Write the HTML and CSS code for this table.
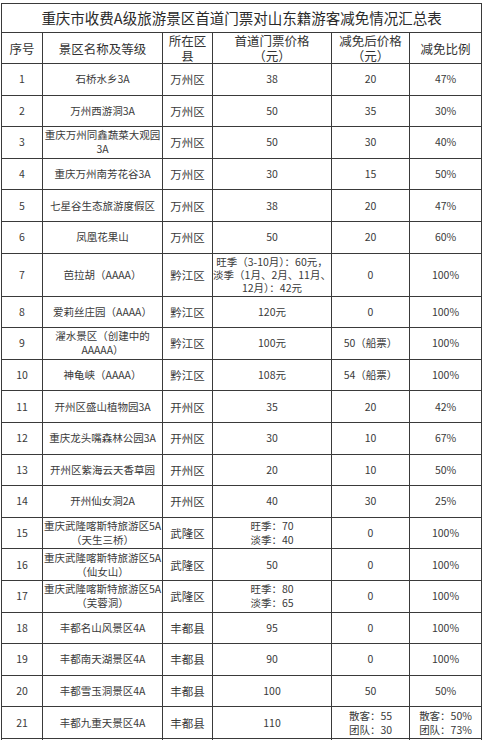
FILE: index.html
```html
<!DOCTYPE html>
<html lang="zh-CN">
<head>
<meta charset="utf-8">
<title>重庆市收费A级旅游景区首道门票对山东籍游客减免情况汇总表</title>
<link rel="stylesheet" href="styles.css">
</head>
<body>
<table class="sheet">
  <colgroup>
    <col class="c-no">
    <col class="c-name">
    <col class="c-area">
    <col class="c-price">
    <col class="c-after">
    <col class="c-rate">
  </colgroup>
  <thead>
    <tr class="r-title"><th colspan="6" class="title">重庆市收费A级旅游景区首道门票对山东籍游客减免情况汇总表</th></tr>
    <tr class="r-head">
      <th>序号</th>
      <th>景区名称及等级</th>
      <th>所在区<br>县</th>
      <th>首道门票价格<br>（元）</th>
      <th>减免后价格<br>（元）</th>
      <th>减免比例</th>
    </tr>
  </thead>
  <tbody>
    <tr><td>1</td><td>石桥水乡3A</td><td class="area">万州区</td><td>38</td><td>20</td><td>47%</td></tr>
    <tr><td>2</td><td>万州西游洞3A</td><td class="area">万州区</td><td>50</td><td>35</td><td>30%</td></tr>
    <tr><td>3</td><td>重庆万州同鑫蔬菜大观园<br>3A</td><td class="area">万州区</td><td>50</td><td>30</td><td>40%</td></tr>
    <tr><td>4</td><td>重庆万州南芳花谷3A</td><td class="area">万州区</td><td>30</td><td>15</td><td>50%</td></tr>
    <tr><td>5</td><td>七星谷生态旅游度假区</td><td class="area">万州区</td><td>38</td><td>20</td><td>47%</td></tr>
    <tr><td>6</td><td>凤凰花果山</td><td class="area">万州区</td><td>50</td><td>20</td><td>60%</td></tr>
    <tr class="r-tall"><td>7</td><td>芭拉胡（AAAA）</td><td class="area">黔江区</td><td class="multi">旺季（3-10月）：60元，<br>淡季（1月、2月、11月、<br>12月）：42元</td><td>0</td><td>100%</td></tr>
    <tr><td>8</td><td>爱莉丝庄园（AAAA）</td><td class="area">黔江区</td><td>120元</td><td>0</td><td>100%</td></tr>
    <tr><td>9</td><td>濯水景区（创建中的<br>AAAAA）</td><td class="area">黔江区</td><td>100元</td><td>50（船票）</td><td>100%</td></tr>
    <tr><td>10</td><td>神龟峡（AAAA）</td><td class="area">黔江区</td><td>108元</td><td>54（船票）</td><td>100%</td></tr>
    <tr><td>11</td><td>开州区盛山植物园3A</td><td class="area">开州区</td><td>35</td><td>20</td><td>42%</td></tr>
    <tr><td>12</td><td>重庆龙头嘴森林公园3A</td><td class="area">开州区</td><td>30</td><td>10</td><td>67%</td></tr>
    <tr><td>13</td><td>开州区紫海云天香草园</td><td class="area">开州区</td><td>20</td><td>10</td><td>50%</td></tr>
    <tr><td>14</td><td>开州仙女洞2A</td><td class="area">开州区</td><td>40</td><td>30</td><td>25%</td></tr>
    <tr><td>15</td><td>重庆武隆喀斯特旅游区5A<br>（天生三桥）</td><td class="area">武隆区</td><td>旺季：70<br>淡季：40</td><td>0</td><td>100%</td></tr>
    <tr><td>16</td><td>重庆武隆喀斯特旅游区5A<br>（仙女山）</td><td class="area">武隆区</td><td>50</td><td>0</td><td>100%</td></tr>
    <tr><td>17</td><td>重庆武隆喀斯特旅游区5A<br>（芙蓉洞）</td><td class="area">武隆区</td><td>旺季：80<br>淡季：65</td><td>0</td><td>100%</td></tr>
    <tr><td>18</td><td>丰都名山风景区4A</td><td class="area">丰都县</td><td>95</td><td>0</td><td>100%</td></tr>
    <tr><td>19</td><td>丰都南天湖景区4A</td><td class="area">丰都县</td><td>90</td><td>0</td><td>100%</td></tr>
    <tr><td>20</td><td>丰都雪玉洞景区4A</td><td class="area">丰都县</td><td>100</td><td>50</td><td>50%</td></tr>
    <tr><td>21</td><td>丰都九重天景区4A</td><td class="area">丰都县</td><td>110</td><td>散客：55<br>团队：30</td><td>散客：50%<br>团队：73%</td></tr>
    <tr><td></td><td></td><td></td><td></td><td></td><td></td></tr>
  </tbody>
</table>
</body>
</html>
```

FILE: styles.css
```css
html, body {
  margin: 0;
  padding: 0;
  background: #ffffff;
}

body {
  padding: 3px 0 0 1px;
  font-family: "Noto Sans CJK SC", "Noto Sans", sans-serif;
  color: #333333;
}

.sheet {
  border-collapse: collapse;
  table-layout: fixed;
  width: 480px;
}

.c-no { width: 41px; }
.c-name { width: 120px; }
.c-area { width: 50px; }
.c-price { width: 119px; }
.c-after { width: 78px; }
.c-rate { width: 72px; }

.sheet th,
.sheet td {
  border: 1px solid #3a3a3a;
  padding: 0;
  text-align: center;
  vertical-align: middle;
  overflow: hidden;
  white-space: nowrap;
}

.sheet td {
  font-size: 10.5px;
  line-height: 14px;
  color: #3a3a3a;
}

.sheet td.multi {
  line-height: 13px;
}

.sheet td.area {
  font-size: 11.5px;
}

.r-title { height: 29px; }

.title {
  font-size: 14.5px;
  font-weight: normal;
  color: #2a2a2a;
  line-height: 18px;
}

.r-head { height: 31px; }

.r-head th {
  font-size: 12.5px;
  font-weight: normal;
  line-height: 15px;
  color: #333333;
}

.sheet tbody tr { height: 31.6px; }

.sheet tbody tr.r-tall { height: 43px; }
```
